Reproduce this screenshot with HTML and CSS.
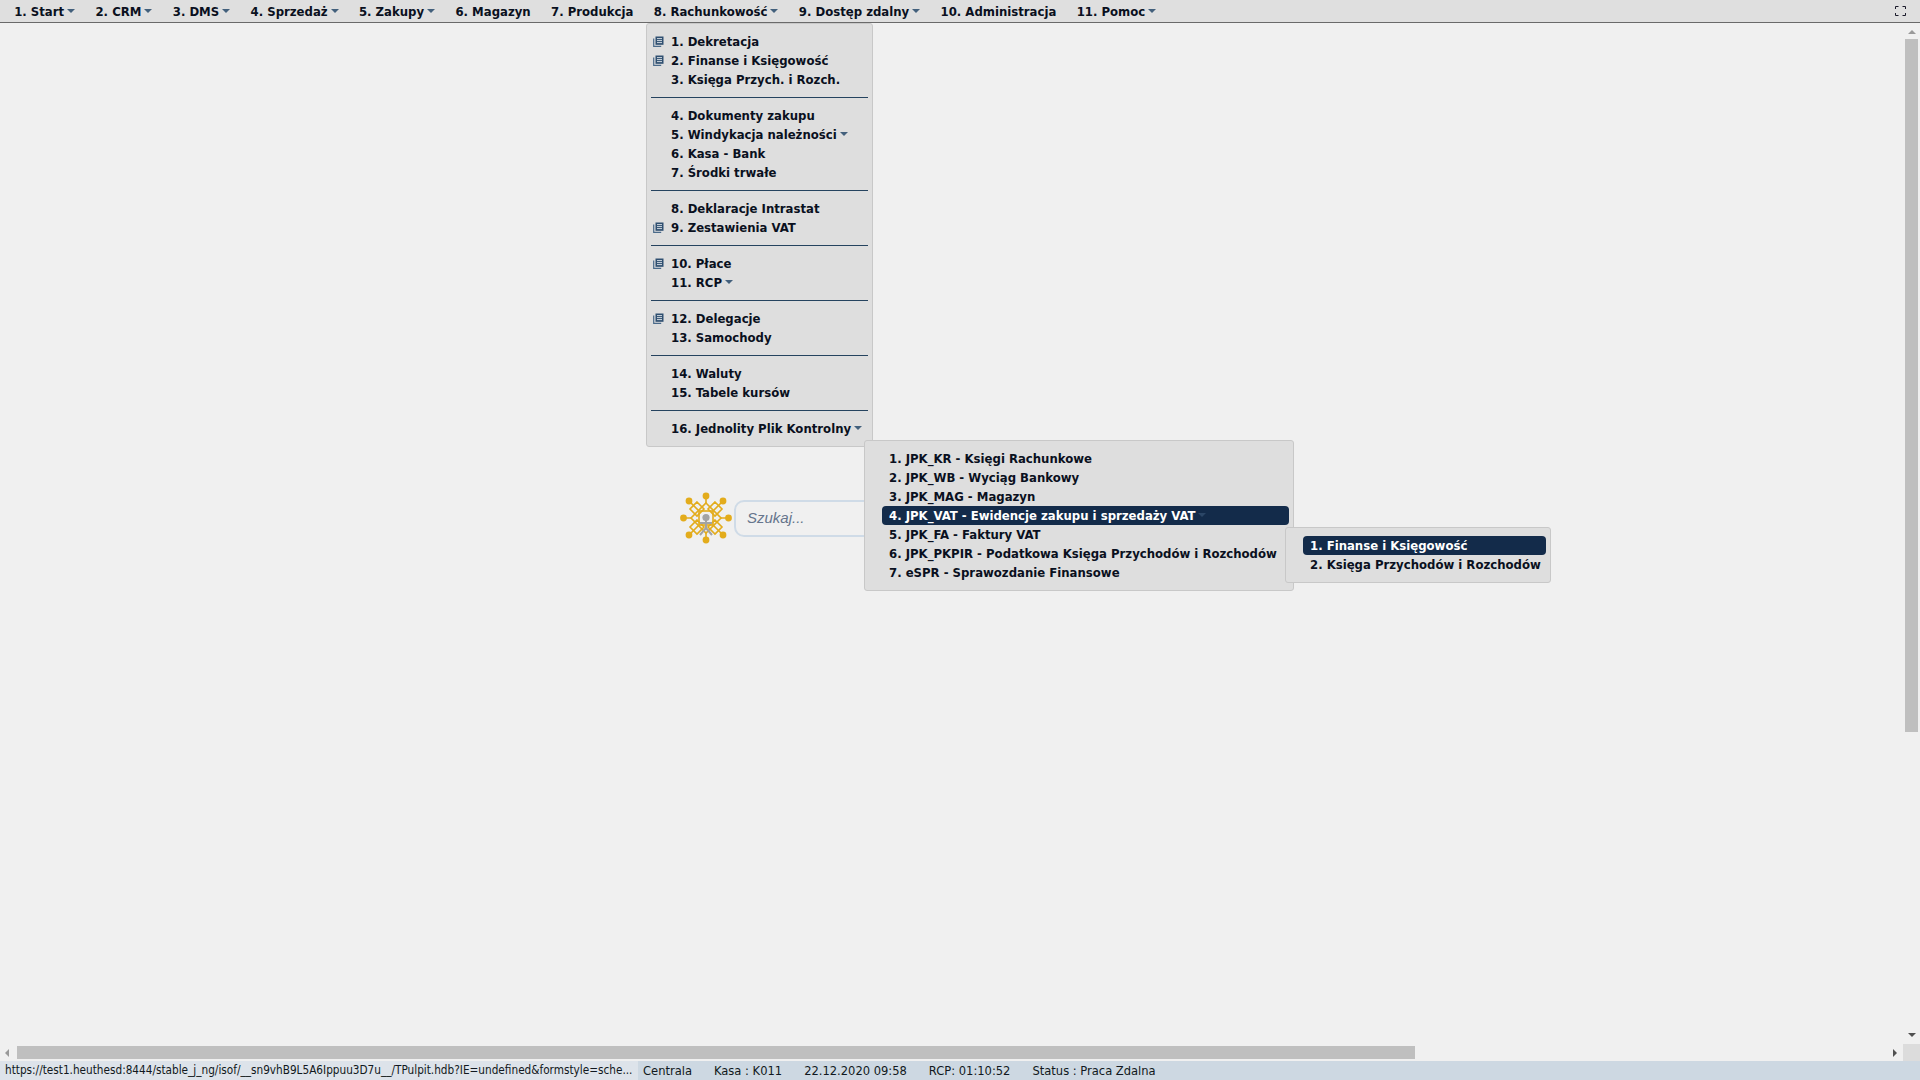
FILE: index.html
```html
<!DOCTYPE html>
<html lang="pl">
<head>
    <meta charset="UTF-8">
    <title>Pulpit</title>
    <link rel="stylesheet" href="styles.css">
</head>
<body>
    <svg class="defs" width="0" height="0">
        <symbol id="book" viewBox="0 0 11 11">
            <path d="M0.7 2.5v7.8h7.5" fill="none" stroke="#4a6a8a" stroke-width="1.2"/>
            <rect x="2.5" y="0.5" width="8" height="8.3" fill="#2f4f70"/>
            <path d="M4 2.6h5M4 4.6h5M4 6.6h5" stroke="#e4e8ec" stroke-width="0.9"/>
        </symbol>
    </svg>

    <nav class="topbar">
        <a class="top-item">1. Start<i class="caret"></i></a>
        <a class="top-item">2. CRM<i class="caret"></i></a>
        <a class="top-item">3. DMS<i class="caret"></i></a>
        <a class="top-item">4. Sprzedaż<i class="caret"></i></a>
        <a class="top-item">5. Zakupy<i class="caret"></i></a>
        <a class="top-item">6. Magazyn</a>
        <a class="top-item">7. Produkcja</a>
        <a class="top-item">8. Rachunkowość<i class="caret"></i></a>
        <a class="top-item">9. Dostęp zdalny<i class="caret"></i></a>
        <a class="top-item">10. Administracja</a>
        <a class="top-item">11. Pomoc<i class="caret"></i></a>
        <span class="fullscreen">
            <svg width="11" height="10" viewBox="0 0 11 10" fill="none" stroke="#1a1a2a" stroke-width="1">
                <path d="M0.5 3V0.5H3.5M7.5 0.5H10.5V3M10.5 7V9.5H7.5M3.5 9.5H0.5V7"/>
            </svg>
        </span>
    </nav>

    <div class="main">
        <div class="desk">
            <div class="search">
                <svg class="logo" width="52" height="52" viewBox="0 0 52 52" fill="none">
                    <g stroke="#e3ac1c" stroke-width="1.6">
                        <path d="M26 5V12M26 40V47M5 26H12M40 26H47M10 10L19 19M42 10L33 19M10 42L19 33M42 42L33 33"/>
                        <path d="M26 11L41 26L26 41L11 26Z"/>
                        <path d="M17 10L24 17L17 24L10 17ZM35 10L42 17L35 24L28 17ZM17 28L24 35L17 42L10 35ZM35 28L42 35L35 42L28 35Z"/>
                        <rect x="19" y="19" width="14" height="14"/>
                    </g>
                    <g fill="#e3ac1c">
                        <circle cx="26" cy="4" r="3.4"/>
                        <circle cx="26" cy="48" r="3.4"/>
                        <circle cx="3.5" cy="26" r="3.4"/>
                        <circle cx="48.5" cy="26" r="3.4"/>
                        <circle cx="9" cy="9" r="3.4"/>
                        <circle cx="43" cy="9" r="3.4"/>
                        <circle cx="9" cy="43" r="3.4"/>
                        <circle cx="43" cy="43" r="3.4"/>
                    </g>
                    <g stroke="#a3a3a3" stroke-width="2">
                        <path d="M26 26V36L20 43M26 36L32 43M20 31H32"/>
                    </g>
                    <circle cx="26" cy="25.5" r="3.6" fill="#a3a3a3"/>
                </svg>
                <input class="search-input" type="text" placeholder="Szukaj...">
            </div>
        </div>
        <div class="vscroll">
            <i class="arrow arrow-up"></i>
            <div class="vthumb"></div>
            <i class="arrow arrow-down"></i>
        </div>
    </div>

    <div class="hscroll">
        <i class="arrow arrow-left"></i>
        <div class="hthumb"></div>
        <i class="arrow arrow-right"></i>
        <div class="corner"></div>
    </div>

    <footer class="statusbar">
        <span class="status-url">https://test1.heuthesd:8444/stable_j_ng/isof/__sn9vhB9L5A6Ippuu3D7u__/TPulpit.hdb?IE=undefined&amp;formstyle=sche...</span>
        <span class="status-cell">Centrala</span>
        <span class="status-cell">Kasa : K011</span>
        <span class="status-cell">22.12.2020 09:58</span>
        <span class="status-cell">RCP: 01:10:52</span>
        <span class="status-cell">Status : Praca Zdalna</span>
    </footer>

    <div class="menu menu-main">
        <div class="row"><svg class="book"><use href="#book"/></svg>1. Dekretacja</div>
        <div class="row"><svg class="book"><use href="#book"/></svg>2. Finanse i Księgowość</div>
        <div class="row">3. Księga Przych. i Rozch.</div>
        <div class="rule"></div>
        <div class="row">4. Dokumenty zakupu</div>
        <div class="row">5. Windykacja należności<i class="caret"></i></div>
        <div class="row">6. Kasa - Bank</div>
        <div class="row">7. Środki trwałe</div>
        <div class="rule"></div>
        <div class="row">8. Deklaracje Intrastat</div>
        <div class="row"><svg class="book"><use href="#book"/></svg>9. Zestawienia VAT</div>
        <div class="rule"></div>
        <div class="row"><svg class="book"><use href="#book"/></svg>10. Płace</div>
        <div class="row">11. RCP<i class="caret"></i></div>
        <div class="rule"></div>
        <div class="row"><svg class="book"><use href="#book"/></svg>12. Delegacje</div>
        <div class="row">13. Samochody</div>
        <div class="rule"></div>
        <div class="row">14. Waluty</div>
        <div class="row">15. Tabele kursów</div>
        <div class="rule"></div>
        <div class="row">16. Jednolity Plik Kontrolny<i class="caret"></i></div>
    </div>

    <div class="menu menu-jpk">
        <div class="row">1. JPK_KR - Księgi Rachunkowe</div>
        <div class="row">2. JPK_WB - Wyciąg Bankowy</div>
        <div class="row">3. JPK_MAG - Magazyn</div>
        <div class="row active">4. JPK_VAT - Ewidencje zakupu i sprzedaży VAT<i class="caret"></i></div>
        <div class="row">5. JPK_FA - Faktury VAT</div>
        <div class="row">6. JPK_PKPIR - Podatkowa Księga Przychodów i Rozchodów</div>
        <div class="row">7. eSPR - Sprawozdanie Finansowe</div>
    </div>

    <div class="menu menu-vat">
        <div class="row active">1. Finanse i Księgowość</div>
        <div class="row">2. Księga Przychodów i Rozchodów</div>
    </div>
</body>
</html>
```

FILE: styles.css
```css
html, body {
    margin: 0;
    padding: 0;
    height: 100%;
}
body {
    position: relative;
    display: flex;
    flex-direction: column;
    height: 100vh;
    overflow: hidden;
    background-color: #f0f0f0;
    font-family: "DejaVu Sans", sans-serif;
    font-stretch: condensed;
    color: #0a1020;
}
.defs {
    position: absolute;
}

/* top menu */
.topbar {
    display: flex;
    align-items: center;
    height: 22px;
    padding-left: 4px;
    background-color: #dfdfdf;
    border-bottom: 1px solid #6a6a6a;
    font-size: 13px;
    font-weight: bold;
    flex-shrink: 0;
}
.top-item {
    padding: 0 10.2px;
    white-space: nowrap;
}
.caret {
    display: inline-block;
    width: 0;
    height: 0;
    margin-left: 3px;
    vertical-align: 3px;
    border-left: 4px solid transparent;
    border-right: 4px solid transparent;
    border-top: 4px solid #43607c;
}
.fullscreen {
    display: flex;
    margin-left: auto;
    margin-right: 14px;
}

/* work area */
.main {
    display: flex;
    flex: 1;
    min-height: 0;
}
.desk {
    flex: 1;
    padding: 469px 0 0 680px;
}
.search {
    display: flex;
    align-items: center;
    gap: 2px;
}
.logo {
    flex-shrink: 0;
}
.search-input {
    width: 400px;
    height: 37px;
    padding: 0 11px 2px;
    box-sizing: border-box;
    background: transparent;
    border: 2px solid #cfdbe7;
    border-radius: 10px;
    font-family: "Liberation Sans", sans-serif;
    font-size: 15px;
    font-style: italic;
}
.search-input::placeholder {
    color: #66758c;
    opacity: 1;
}

/* scrollbars */
.vscroll {
    display: flex;
    flex-direction: column;
    align-items: center;
    width: 17px;
    padding-top: 7px;
}
.vthumb {
    width: 13px;
    height: 693px;
    margin-top: 5px;
    background-color: #bfbfbf;
}
.arrow {
    width: 0;
    height: 0;
    flex-shrink: 0;
}
.arrow-up {
    border-left: 4px solid transparent;
    border-right: 4px solid transparent;
    border-bottom: 4px solid #9a9a9a;
}
.arrow-down {
    margin-top: auto;
    margin-bottom: 7px;
    border-left: 4px solid transparent;
    border-right: 4px solid transparent;
    border-top: 4px solid #505050;
}
.hscroll {
    display: flex;
    align-items: center;
    height: 17px;
    flex-shrink: 0;
}
.hthumb {
    width: 1398px;
    height: 13px;
    margin-left: 8px;
    background-color: #bfbfbf;
}
.arrow-left {
    margin-left: 5px;
    border-top: 4px solid transparent;
    border-bottom: 4px solid transparent;
    border-right: 4px solid #9a9a9a;
}
.arrow-right {
    margin-left: auto;
    margin-right: 6px;
    border-top: 4px solid transparent;
    border-bottom: 4px solid transparent;
    border-left: 4px solid #505050;
}
.corner {
    width: 17px;
    height: 17px;
    background-color: #dcdcdc;
}

/* status bar */
.statusbar {
    display: flex;
    align-items: center;
    height: 19px;
    background-color: #cdd8e2;
    font-size: 12.8px;
    color: #111820;
    white-space: nowrap;
    flex-shrink: 0;
}
.status-url {
    box-sizing: border-box;
    width: 638px;
    padding-left: 5px;
    line-height: 19px;
    background-color: #dde3ea;
    font-size: 11.7px;
    overflow: hidden;
}
.status-cell {
    margin-left: 5px;
    margin-right: 17px;
}

/* dropdown menus */
.menu {
    position: absolute;
    box-sizing: border-box;
    padding: 8px 4px;
    background-color: #dedede;
    border: 1px solid #c8c8c8;
    border-radius: 3px;
    font-size: 13px;
    font-weight: bold;
    white-space: nowrap;
}
.menu-main {
    left: 646px;
    top: 23px;
    width: 227px;
}
.menu-jpk {
    left: 864px;
    top: 440px;
    width: 430px;
}
.menu-vat {
    left: 1285px;
    top: 527px;
    width: 266px;
}
.menu-jpk .row,
.menu-vat .row {
    margin-left: 13px;
    padding-left: 7px;
}
.row {
    position: relative;
    height: 19px;
    padding-left: 20px;
    line-height: 19px;
    border-radius: 4px;
}
.row.active {
    background-color: #132b4a;
    color: #fff;
}
.row.active .caret {
    border-top-color: #2b4666;
}
.rule {
    height: 1px;
    margin: 8px 0;
    background-color: #25435f;
}
.book {
    position: absolute;
    left: 2px;
    top: 4px;
    width: 11px;
    height: 11px;
}
```
